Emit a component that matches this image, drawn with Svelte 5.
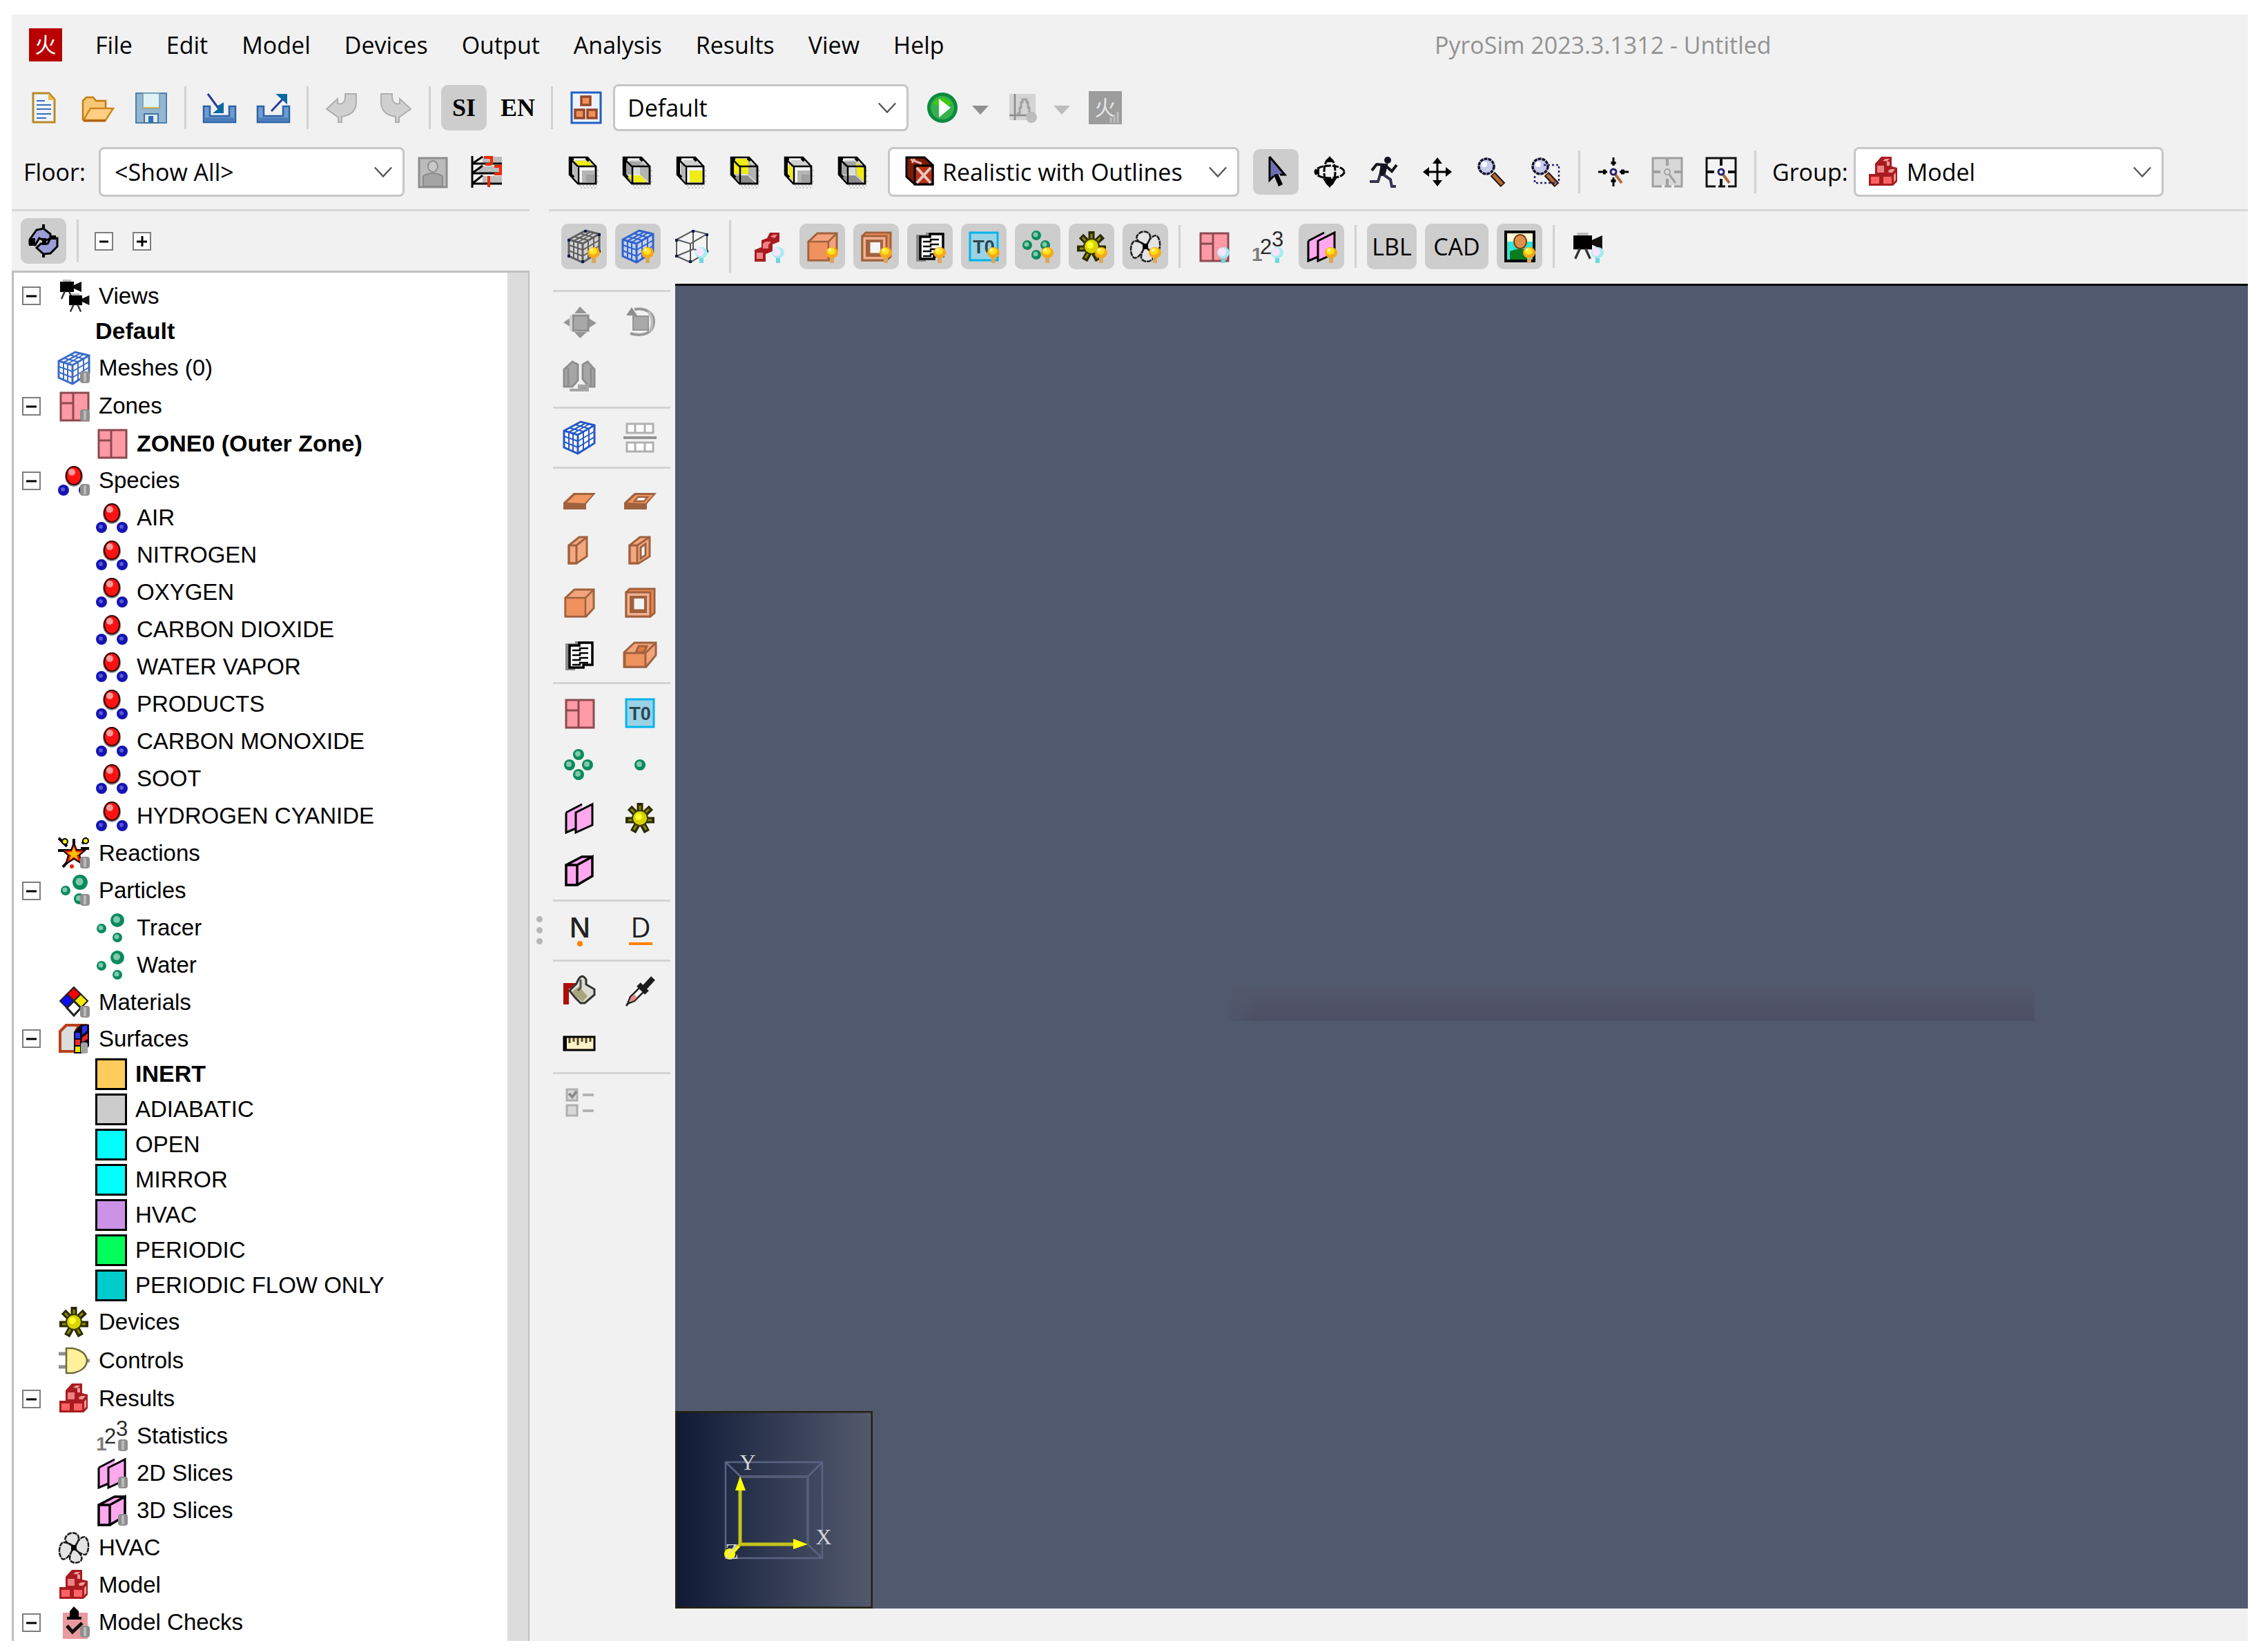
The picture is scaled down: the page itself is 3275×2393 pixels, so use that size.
<script>
  const line = (x1, y1, x2, y2) => `M${x1} ${y1}L${x2} ${y2}`;
  const bulb = `<rect x="35" y="39" width="6" height="9" fill="#d8a860"/><ellipse cx="38" cy="33" rx="9" ry="8" fill="#f5a81c"/><ellipse cx="37" cy="31" rx="6" ry="5" fill="#ffe21a"/><circle cx="35" cy="29" r="2" fill="#fff6b0"/>`;
  const coldBulb = `<rect x="35" y="39" width="6" height="9" fill="#6fd6de"/><ellipse cx="38" cy="33" rx="9" ry="8" fill="#a4ecf2"/><ellipse cx="36" cy="32" rx="6" ry="6" fill="#f6e4fb"/>`;
  const pill = `<rect x="33" y="29" width="14" height="17" rx="4" fill="#8f8f8f"/><rect x="38" y="31" width="4" height="13" fill="#b9b9b9"/>`;

  const lit = {
    top: '12,8 33,8 40,15 19,15',
    bottom: '11,29 31,29 40,39 20,39',
    front: '24,22 42,22 42,39 24,39',
    back: '8,5 31,5 31,27 8,27',
    left: '11,12 17,18 17,37 11,30',
    right: '31,9 36,15 43,19 43,38 32,28'
  };
  function cube(part) {
    const inside = ['bottom', 'back', 'right'].includes(part);
    return `<path d="M20 44H46M22 47H44M46 22H48M46 30H48M46 38H48" stroke="#c4c4c4" stroke-width="2" stroke-dasharray="2 3"/>
      <polygon points="6,3 32,3 44,16 44,41 18,41 6,28" fill="#f4f4f4"/>
      <polygon points="14,7 33,7 42,16 18,16" fill="#d0d0d0"/>
      ${inside
        ? '<polygon points="10,9 30,9 30,28 10,28" fill="#a4a4a4"/><polygon points="30,9 44,18 44,40 30,28" fill="#b4b4b4"/><polygon points="8,29 30,29 42,40 20,40" fill="#8c8c8c"/><rect x="20" y="17" width="10" height="11" fill="#dcdcdc"/>'
        : '<polygon points="11,11 17,17 17,38 11,30" fill="#b8b8b8"/><rect x="24" y="22" width="18" height="17" fill="#b4b4b4"/><rect x="30" y="28" width="12" height="11" fill="#a0a0a0"/>'}
      <polygon points="${lit[part]}" fill="#f0ec14"/>
      <path d="M6 3H32L44 16V41H18L6 28ZM6 4L18 16" fill="none" stroke="#000" stroke-width="2.5"/>
      <rect x="19" y="16" width="25" height="25" fill="none" stroke="#000" stroke-width="2.5"/>
      <path d="M8 3V28M5 5H12M8 28L12 32M30 4L34 8" stroke="#000" stroke-width="4"/>`;
  }
  function mesh(stroke, fill = '#fff', dense = true) {
    const grid = [
      [9, 16, 9, 41], [15, 18, 15, 44], [2, 22, 22, 29], [2, 30, 22, 38], [30, 15, 30, 42], [38, 11, 38, 37],
      [22, 29, 46, 15], [22, 38, 46, 23], [9, 16, 33, 3], [15, 18, 39, 4], [10, 10, 30, 15], [18, 5, 38, 11]
    ];
    const hollow = [[26, 1, 26, 28], [26, 28, 2, 38], [26, 28, 46, 32]];
    return `<polygon points="2,14 26,1 46,6 46,32 22,47 2,38" fill="${fill}"/>
      <path d="${(dense ? grid : hollow).map((g) => line(...g)).join('')}" stroke="${stroke}" stroke-width="2"/>
      <path d="M2 14L26 1L46 6V32L22 47L2 38ZM2 14L22 20L46 6M22 20V47" fill="none" stroke="${stroke}" stroke-width="${dense ? 3 : 2}"/>`;
  }
  const nodes = '<path d="M24 0H28V4H24ZM44 5H48V9H44ZM0 13H4V17H0ZM44 29H48V33H44ZM0 36H4V40H0ZM20 44H24V48H20Z" fill="#0a1c50"/>';
  const zone = `<rect x="5" y="5" width="40" height="40" fill="#ff9aa6"/><path d="M5 5H45V45H5ZM23 5V45M5 20H23" fill="none" stroke="#8b4a50" stroke-width="3"/>`;
  const ball = (x, y, r) => `<circle cx="${x}" cy="${y}" r="${r}" fill="#0a8a5e"/><circle cx="${x - 1}" cy="${y - 1}" r="${r / 2}" fill="#7fc9ab"/>`;
  const molecule = `<ellipse cx="24" cy="18" rx="13" ry="15" fill="#8a8a8a"/><ellipse cx="24" cy="17" rx="12" ry="14" fill="#3a0000"/><ellipse cx="24" cy="17" rx="10" ry="12" fill="#ff1212"/><ellipse cx="21" cy="12" rx="5" ry="5" fill="#ff9a9a"/>
      <circle cx="9" cy="38" r="8" fill="#1414b4"/><circle cx="39" cy="38" r="8" fill="#1414b4"/><circle cx="8" cy="37" r="3" fill="#5a5ad0"/><circle cx="38" cy="37" r="3" fill="#5a5ad0"/>`;
  const gear = `<path d="M24 2V20M3 27H45M9 9L24 24L40 9M14 44L24 26L34 44" fill="none" stroke="#2a2a00" stroke-width="9"/><path d="M24 6V20M7 27H41M11 11L24 24L37 11M15 41L24 26L33 41" fill="none" stroke="#8d8a00" stroke-width="3"/><circle cx="24" cy="24" r="12" fill="#3a3a00"/><circle cx="24" cy="24" r="10" fill="#d8d400"/><circle cx="22" cy="22" r="5" fill="#ffff2a"/>`;
  const fan = `<path d="M24 22C13 18 8 12 14 6C20 0 30 2 31 9C31 14 28 19 26 22C29 14 36 6 41 9C47 15 46 30 41 34C36 34 29 30 27 27C33 32 38 38 34 43C28 48 19 46 18 40C18 35 20 30 22 27C18 35 12 43 7 40C1 34 2 20 8 16C14 16 20 19 24 22Z" fill="#e4e4e4" stroke="#1c1c1c" stroke-width="2.5" stroke-dasharray="7 1"/><rect x="20" y="20" width="8" height="8" fill="#000"/>`;
  const redBlocks = `<path d="M21 2H36V16L44 18V38L38 44H3V27H12V12Z" fill="#a81c1f"/><path d="M23 8L27 5H33L29 9V15H33V9" fill="#f09a9c"/><rect x="15" y="15" width="10" height="10" fill="#f08083"/><rect x="6" y="31" width="12" height="10" fill="#ff6266"/><rect x="24" y="31" width="12" height="10" fill="#ff6266"/><path d="M31 22L35 20H41L37 25H32Z M39 28L42 25V36L39 39Z" fill="#f09a9c"/>`;
  const count = `<g font-family="Liberation Sans"><text x="1" y="45" font-size="28" font-weight="700" fill="#7c7c7c">1</text><text x="13" y="35" font-size="31" fill="#2c2c2c">2</text><text x="30" y="24" font-size="31" fill="#2c2c2c">3</text></g>`;
  const slice2 = `<path d="M5 16L28 4V34L5 45Z" fill="#ffa8ee" /><path d="M19 16L43 4V34L19 45Z" fill="#ffa8ee"/><path d="M5 16L28 4M5 16V45L19 39M19 16L43 4V34L19 45Z" fill="none" stroke="#000" stroke-width="3"/>`;
  const slice3 = `<path d="M5 16L28 4H43V32L21 45H5Z" fill="#ffa8ee"/><path d="M5 16H21V45H5ZM21 16L43 4V32L21 45M5 16L28 4H43" fill="none" stroke="#000" stroke-width="3.5"/>`;
  const camera = `<rect x="0" y="3" width="20" height="15" fill="#000"/><path d="M20 8L31 3V18L20 13Z" fill="#111"/><rect x="4" y="0" width="12" height="3" fill="#bbb"/><path d="M7 17L2 28M13 17L18 28" stroke="#333" stroke-width="2.5"/>`;
  const box = `<path d="M4 17L17 5H45V32L34 44H4Z" fill="#f4a47c" stroke="#a0623e" stroke-width="3"/><rect x="4" y="17" width="29" height="27" fill="#f0925e" stroke="#a0623e" stroke-width="2.5"/><path d="M33 17L45 5" stroke="#a0623e" stroke-width="2.5"/>`;
  const frame = `<path d="M4 9L9 4H45V39L39 44H4Z" fill="#ee8a52" stroke="#a0623e" stroke-width="3"/><rect x="4" y="9" width="35" height="35" fill="#f4b08e" stroke="#a0623e" stroke-width="3"/><rect x="11" y="16" width="21" height="21" fill="#f4f4f4" stroke="#a0623e" stroke-width="4"/><path d="M13 16V36H32" fill="none" stroke="#a0623e" stroke-width="5"/>`;
  const louver = `<path d="M4 7H18V4H44V39H32V43H18V46H4Z" fill="#8a8a8a"/><path d="M10 10H24V6H43V38H30V42H10Z" fill="#fff" stroke="#000" stroke-width="3.5"/><path d="M14 17H25V14H37M14 24H25V21H37M14 31H25V28H37M14 38H25V35H37" fill="none" stroke="#000" stroke-width="2.5"/>`;
  const t0 = `<rect x="4" y="4" width="40" height="40" fill="#9ad2e6" stroke="#00b4ea" stroke-width="3"/><text x="24" y="34" font-size="27" font-weight="700" text-anchor="middle" font-family="Liberation Sans" fill="#2c4650">T0</text>`;
  const glass = `<circle cx="17" cy="16" r="11" fill="#c9cbec" stroke="#14142c" stroke-width="3.5" stroke-dasharray="5 1"/><circle cx="14" cy="13" r="4" fill="#fff"/><path d="M26 27L41 43" stroke="#1c0c00" stroke-width="9"/><path d="M27 28L40 42" stroke="#b06a3c" stroke-width="5"/>`;
  const target = (c, h, hub) => `<path d="M24 3V15M24 32V45M2 24H15M33 24H46" stroke="${c}" stroke-width="3"/><path d="M24 9V13M24 35V39M9 24H13M35 24H40" stroke="${c}" stroke-width="7"/><path d="M27 28L36 40" stroke="${h}" stroke-width="4"/><circle cx="24" cy="24" r="4" fill="#e8e8f8" stroke="${hub}" stroke-width="3"/>`;
  const brackets = (c, f) => `<path d="M3 4H45V45H3Z" fill="${f}" stroke="${c}" stroke-width="3"/><path d="M24 4V15M24 34V45M3 24H14M34 24H45" stroke="${c}" stroke-width="4"/><path d="M16 45H20M30 45H34" stroke="#f1f1f1" stroke-width="4"/>`;
  const arrows = (c) => `<path d="M24 5V43M5 24H43" stroke="${c}" stroke-width="3"/><path d="M24 3L31 12H17ZM24 45L31 36H17ZM3 24L12 17V31ZM45 24L36 17V31Z" fill="${c}"/>`;
  const flame = (bg, fg) => `<rect width="48" height="48" fill="${bg}"/><text x="24" y="35" font-size="31" text-anchor="middle" font-family="Noto Sans CJK SC" fill="${fg}">火</text>`;
  const tray = `<path d="M1 22H10V36H38V22H47V45H1Z" fill="#6f9bd0" stroke="#2d62a6" stroke-width="2.5"/><path d="M3 41H45" stroke="#4a7cba" stroke-width="5"/>`;
  const undo = `<path d="M2 26L18 11V18Q30 21 29 4H45V14Q46 34 24 37V45H19V38Z" fill="#d0d0d0" stroke="#aeaeae" stroke-width="2"/>`;

  const icons = {
    logo: flame('#b80000', '#fff'),
    logoGrey: flame('#9c9c9c', '#e4e4e4') + '<path d="M32 46V38M37 46V34M42 46V30" stroke="#bdbdbd" stroke-width="3"/>',
    file: `<path d="M9 3H32L40 12V45H9Z" fill="#eef4fd" stroke="#b98a24" stroke-width="3"/><path d="M31 3V13H40Z" fill="#f0b840"/><path d="M14 14H26M14 20H35M14 26H35M14 33H35M14 39H28" stroke="#3c6eb4" stroke-width="2"/>`,
    open: `<path d="M3 42V14L8 9H18L22 14H36V24" fill="#f8c878" stroke="#c47a10" stroke-width="2.5"/><path d="M4 42L14 25H47L36 42Z" fill="#ffd083" stroke="#d0841c" stroke-width="2.5"/><path d="M4 43H36" stroke="#b06008" stroke-width="3"/>`,
    save: `<rect x="2" y="3" width="44" height="43" fill="#94b6d0" stroke="#4f80a8" stroke-width="2"/><rect x="12" y="3" width="24" height="22" fill="#dff2f6" stroke="#6e96b4" stroke-width="1.5"/><rect x="12" y="23" width="24" height="2" fill="#d8b84c"/><rect x="14" y="33" width="20" height="13" fill="#dceaf4" stroke="#3f74a0" stroke-width="2"/><rect x="20" y="36" width="7" height="9" fill="#2f6cb4"/>`,
    import: tray + `<path d="M7 4L24 27" stroke="#2a3aa0" stroke-width="3"/><path d="M29 18V31H17L23 26L22 22Z" fill="#0a6aa0" stroke="#0a6aa0" stroke-width="2"/>`,
    export: tray + `<path d="M21 29L38 11" stroke="#2a3aa0" stroke-width="3"/><path d="M30 5H43V17Z" fill="#0a6aa0" stroke="#0a6aa0" stroke-width="2"/>`,
    undo,
    redo: `<g transform="matrix(-1 0 0 1 48 0)">${undo}</g>`,
    results: `<rect x="3" y="2" width="42" height="44" fill="#eef2fb" stroke="#1f5fc4" stroke-width="3"/><rect x="17" y="8" width="13" height="12" fill="#f09058" stroke="#94482a" stroke-width="3.5"/><rect x="8" y="27" width="13" height="12" fill="#f09058" stroke="#94482a" stroke-width="3.5"/><rect x="26" y="27" width="13" height="12" fill="#f09058" stroke="#94482a" stroke-width="3.5"/>`,
    run: `<circle cx="24" cy="24" r="22" fill="#0c8a3e"/><circle cx="24" cy="24" r="17" fill="#35b04c"/><path d="M10 18Q24 2 38 18L24 24Z" fill="#3ccc10"/><path d="M19 11L36 24L19 38Z" fill="#fff"/>`,
    plot: `<rect x="3" y="4" width="38" height="38" fill="#d4d4d4"/><path d="M11 4V42M3 35H41" stroke="#8a8a8a" stroke-width="2.5"/><path d="M14 32H18V24H20V16H22V12H28V16H30V24H32V32H38" fill="none" stroke="#a0a0a0" stroke-width="3"/><circle cx="35" cy="38" r="8" fill="#bdbdbd"/>`,
    person: `<rect x="4" y="4" width="40" height="42" fill="#bcbcbc" stroke="#8e8e8e" stroke-width="3"/><ellipse cx="24" cy="16" rx="7" ry="8" fill="#c8c8c8" stroke="#8e8e8e" stroke-width="2"/><path d="M10 45V30Q24 22 38 30V45Z" fill="#a4a4a4" stroke="#8a8a8a" stroke-width="2"/>`,
    floors: `<path d="M18 2H46V12H18ZM12 16H46V26H12ZM18 30H46V40H18Z" fill="#bdbdbd"/><path d="M3 1V47M3 12H46M3 26H46M3 41H46M3 12L18 2M3 26L18 15M3 41L18 29" fill="none" stroke="#000" stroke-width="3"/><path d="M20 3H31V13M22 13H31M35 16H44V27H35M27 30V46" fill="none" stroke="#f02800" stroke-width="4"/>`,
    brick: `<path d="M6 3H32L44 14V42H18L6 31Z" fill="#7c1c08" stroke="#000" stroke-width="3"/><rect x="18" y="15" width="26" height="27" fill="#b83014" stroke="#000" stroke-width="3"/><path d="M21 18L41 40M41 18L21 40" stroke="#e8c8c0" stroke-width="4"/><path d="M12 6L28 12M18 5L14 11" stroke="#e8b0a4" stroke-width="3"/>`,
    pointer: `<path d="M15 2V36L22 30L28 45L34 42L28 28H37Z" fill="#6d70b4"/><path d="M15 2V36L21 30M15 2L37 28H30" fill="none" stroke="#000" stroke-width="3"/><path d="M21 28L28 45L34 42L27 27Z" fill="#000"/>`,
    orbit: `<ellipse cx="24" cy="24" rx="21" ry="9" fill="none" stroke="#000" stroke-width="3" stroke-dasharray="9 2"/><ellipse cx="24" cy="24" rx="8" ry="19" fill="none" stroke="#000" stroke-width="3" stroke-dasharray="9 2"/><path d="M24 1L31 10H17ZM24 47L34 34H14Z" fill="#000"/><path d="M2 24L9 17V30Z" fill="#000"/>`,
    walk: `<circle cx="30" cy="7" r="5" fill="#14141e"/><path d="M13 13L28 14L24 29M27 15L36 23L43 14M14 13L7 22" fill="none" stroke="#14141e" stroke-width="4"/><path d="M20 13H30L26 30H17Z" fill="#14141e"/><path d="M19 28L16 38H4M24 28L34 35L36 45H42" fill="none" stroke="#33334e" stroke-width="4"/>`,
    pan: arrows('#000'),
    zoom: glass,
    zoomBox: glass + `<path d="M22 14H44V40H9V28" fill="none" stroke="#23236a" stroke-width="2.5" stroke-dasharray="3 3"/>`,
    fit: target('#000', '#b06a3c', '#23236a'),
    fitGrey: brackets('#a0a0a0', '#d8d8d8') + `<path d="M27 28L36 40" stroke="#a0a0a0" stroke-width="3"/><circle cx="24" cy="24" r="4" fill="#ddd" stroke="#a0a0a0" stroke-width="2"/>`,
    fitBox: brackets('#111', '#f4f4f4') + `<path d="M27 28L36 40" stroke="#b06a3c" stroke-width="4"/><circle cx="24" cy="24" r="4" fill="#fff" stroke="#23236a" stroke-width="3"/>`,
    blocks: redBlocks,
    refresh: `<path d="M24 0V8M24 40V48" stroke="#000" stroke-width="4"/><path d="M4 22L14 8L24 6L34 14V20L26 24L18 20L12 30L4 28Z" fill="#9c9cd6" stroke="#000" stroke-width="3"/><path d="M44 24V32L34 42L24 43L14 34L20 28L30 28L34 20H44Z" fill="#9c9cd6" stroke="#000" stroke-width="3"/><path d="M3 20H12V31H3ZM22 20H28V30H22ZM34 16H42V22H34Z" fill="#000"/>`,
    mesh: mesh('#2458c4'),
    meshOn: mesh('#2f62cc', '#c4d0ee') + bulb,
    meshGrey: mesh('#5e5e5e', '#d2d2d2') + nodes + bulb,
    meshOutline: mesh('#5a5a5a', '#f4f4f4', false) + nodes + coldBulb,
    meshTree: mesh('#3a6cc8') + pill,
    group: `<path d="M4 46V29L14 25V15L22 12L26 4H40V17L30 21V31L20 35V46Z" fill="#a81c1f"/><path d="M27 10L31 7H37L33 12ZM16 20L20 17H28L24 22V27H16ZM7 33H16V42H7Z" fill="#f08083"/>` + coldBulb,
    boxOn: box + bulb,
    frameOn: frame + bulb,
    louverOn: louver + bulb,
    t0On: t0 + bulb,
    particlesOn: ball(22, 8, 7) + ball(9, 22, 7) + ball(35, 22, 7) + ball(22, 36, 7) + bulb,
    gearOn: gear + bulb,
    fanOn: fan + bulb,
    zoneOff: zone + coldBulb,
    countOff: count + coldBulb,
    sliceOn: slice2 + bulb,
    image: `<rect x="4" y="3" width="41" height="42" fill="#fffbd8" stroke="#000" stroke-width="4"/><rect x="6" y="17" width="37" height="26" fill="#2fe6d2"/><ellipse cx="25" cy="17" rx="9" ry="10" fill="#e0924c" stroke="#7a3a10" stroke-width="2"/><path d="M10 43V31Q25 24 40 31V43Z" fill="#0c7a1e"/>` + bulb,
    cameraOff: `<g transform="translate(3 4) scale(1.35)">${camera}</g>` + coldBulb,
    views: `<g transform="translate(4 0)">${camera}</g><g transform="translate(17 20) scale(.95)">${camera}</g>`,
    zoneTree: zone + pill,
    zone,
    molecule,
    speciesTree: molecule + pill,
    reaction: `<path d="M2 2L14 14M36 10L43 3M1 20H14M34 17H46M8 44L16 35M24 3V14" stroke="#000" stroke-width="4"/><path d="M24 9L28 19H41L32 27L37 40L24 32L12 40L16 27L7 19H20Z" fill="#f02010" stroke="#000" stroke-width="2"/><path d="M24 15L27 22L34 23L28 27L30 34L24 29L18 34L20 27L14 23L21 22Z" fill="#ffc400"/><circle cx="11" cy="7" r="4" fill="#ffee00" stroke="#000" stroke-width="2"/><circle cx="41" cy="6" r="4" fill="#ffee00" stroke="#000" stroke-width="2"/><circle cx="21" cy="43" r="3" fill="#f02010"/>` + pill,
    particlesTree: ball(33, 12, 11) + ball(12, 24, 7) + ball(32, 36, 8) + pill,
    tracer: ball(32, 13, 10) + ball(9, 25, 7) + ball(32, 38, 7),
    material: `<path d="M24 2L34 12L24 22L14 12Z" fill="#f00000" stroke="#222" stroke-width="2"/><path d="M14 12L24 22L14 32L4 22Z" fill="#0c0cf0" stroke="#222" stroke-width="2"/><path d="M34 12L44 22L34 32L24 22Z" fill="#f0e800" stroke="#222" stroke-width="2"/><path d="M24 22L34 32L24 43L14 32Z" fill="#fff" stroke="#222" stroke-width="3"/>` + pill,
    surface: `<path d="M2 12L12 2H44V44H2Z" fill="#b8401c"/><path d="M6 14L14 6H28L24 14V40H6Z" fill="#dcdcdc"/><path d="M24 14L34 3H46V34L38 45H24Z" fill="#050518"/><path d="M26 15H33V23H26ZM36 6L43 4V12L36 18Z" fill="#2c34f0"/><rect x="26" y="25" width="7" height="8" fill="#f02828"/><path d="M36 22L44 16V24L36 29Z" fill="#f02828"/><rect x="26" y="35" width="7" height="8" fill="#f0e800"/><rect x="34" y="29" width="10" height="16" rx="3" fill="#a4a4a4"/>`,
    gear,
    gate: `<path d="M2 14H14M2 33H14M42 24H47" stroke="#8f8f8f" stroke-width="5"/><path d="M13 6H22Q42 10 43 24Q42 38 22 42H13Z" fill="#fff29a" stroke="#6e6a40" stroke-width="2.5"/>`,
    countTree: count + pill,
    slice2Tree: slice2 + pill,
    slice3Tree: slice3 + pill,
    fan,
    check: `<rect x="8" y="10" width="36" height="38" fill="#ea9a9e"/><path d="M24 1L31 8V16H35V20H14V16H18V8Z" fill="#000"/><path d="M14 29L22 38L36 25" fill="none" stroke="#111" stroke-width="5"/>` + pill,
    move: `<path d="M25 1L35 11H17ZM25 47L35 38H17ZM1 24L12 17V31ZM49 25L38 18V32Z" fill="#959595"/><rect x="15" y="14" width="22" height="22" fill="#a8a8a8" stroke="#8e8e8e" stroke-width="3"/><rect x="10" y="14" width="4" height="22" fill="#d4d4d4"/>`,
    rotate: `<path d="M16 5C34 2 45 12 44 24C43 38 30 46 10 40" fill="none" stroke="#989898" stroke-width="4"/><path d="M36 8Q46 22 38 38" fill="none" stroke="#bdbdbd" stroke-width="4"/><path d="M4 14L12 2L20 14Z" fill="#909090"/><rect x="14" y="15" width="22" height="20" fill="#a8a8a8" stroke="#959595" stroke-width="2"/>`,
    mirror: `<path d="M2 14L14 3L22 7V30L14 39H2Z" fill="#a6a6a6" stroke="#8e8e8e" stroke-width="3"/><path d="M8 12V38" stroke="#8e8e8e" stroke-width="3"/><path d="M46 14L36 3L29 7V28L38 39H46Z" fill="#a6a6a6" stroke="#8e8e8e" stroke-width="3"/><path d="M41 12V38" stroke="#8e8e8e" stroke-width="3"/><path d="M10 44H28M24 38H36V44H24Z" stroke="#a6a6a6" stroke-width="4" fill="#999"/>`,
    split: `<path d="M5 4H43V17H5ZM17 4V17M31 4V17M5 31H43V44H5ZM17 31V44M31 31V44" fill="#fff" stroke="#b0b0b0" stroke-width="3"/><path d="M0 24H48" stroke="#949494" stroke-width="4"/>`,
    slab: `<path d="M1 25L16 11H48L34 27V35H1Z" fill="#a0623e"/><path d="M6 25L18 14H43L32 26Z" fill="#f2965f"/>`,
    slabHole: `<path d="M1 25L16 11H48L34 27V35H1Z" fill="#a0623e"/><path d="M6 25L18 14H43L32 26Z" fill="#f2965f"/><path d="M16 23L21 17H35L30 23Z" fill="#fff" stroke="#a0623e" stroke-width="2.5"/>`,
    wall: `<path d="M9 17L24 5H35V33L20 43H9Z" fill="#f4a880" stroke="#a0623e" stroke-width="3"/><path d="M9 17H20V43H9ZM20 17L35 5" fill="none" stroke="#a0623e" stroke-width="3"/>`,
    wallHole: `<path d="M9 17L24 5H38V33L22 43H9Z" fill="#f4a880" stroke="#a0623e" stroke-width="3"/><path d="M9 17H20V43H9ZM20 17L38 5" fill="none" stroke="#a0623e" stroke-width="3"/><path d="M25 20L32 15V31L25 36Z" fill="#fff" stroke="#a0623e" stroke-width="3"/>`,
    box,
    frame,
    louver,
    stack: `<path d="M1 20L16 6H47V24L33 41H1Z" fill="#f4a47c" stroke="#a0623e" stroke-width="3"/><path d="M18 20L22 11H34L30 20Z" fill="#e07a40" stroke="#a0623e" stroke-width="3"/><rect x="2" y="21" width="30" height="20" fill="#f0925e" stroke="#a0623e" stroke-width="3"/><path d="M33 20L46 7" stroke="#a0623e" stroke-width="3"/>`,
    t0,
    particles: ball(23, 8, 8) + ball(10, 23, 8) + ball(36, 23, 8) + ball(23, 37, 8),
    particle: ball(24, 23, 8),
    slice2,
    slice3,
    node: `<text x="25" y="34" font-size="40" font-weight="600" text-anchor="middle" font-family="Open Sans" fill="#222">N</text><circle cx="25" cy="43" r="4" fill="#ff8200"/>`,
    duct: `<text x="25" y="34" font-size="40" text-anchor="middle" font-family="Open Sans" fill="#222">D</text><path d="M8 43H42" stroke="#ff8200" stroke-width="4"/>`,
    bucket: `<path d="M5 44V17H20" fill="none" stroke="#b00c0c" stroke-width="8"/><path d="M10 24L20 14Q27 -4 34 8V15L46 22V30L32 42H26L18 34Z" fill="#dcdcd2" stroke="#333" stroke-width="3"/><path d="M14 25L24 18L36 32L29 40L19 33Z" fill="#a8a67e"/><path d="M26 8V20L22 24" fill="none" stroke="#555" stroke-width="3"/>`,
    dropper: `<path d="M6 43L10 33L24 19L30 25L16 39Z" fill="#f4f4f4" stroke="#222" stroke-width="2.5"/><path d="M8 40L12 32L17 30L19 35L14 39Z" fill="#e8868a"/><path d="M22 15L34 27M30 20L43 6" stroke="#1c1c1c" stroke-width="8"/><path d="M4 46L7 42" stroke="#333" stroke-width="3"/>`,
    ruler: `<rect x="2" y="15" width="44" height="19" fill="#fff2c8" stroke="#000" stroke-width="3"/><path d="M4 15V34" stroke="#000" stroke-width="4"/><path d="M10 16V24M16 16V22M22 16V27M28 16V22M34 16V24M40 16V22" stroke="#4c4422" stroke-width="3"/>`,
    options: `<path d="M6 4H21V20H6ZM6 27H21V42H6Z" fill="#d8d8d8" stroke="#b0b0b0" stroke-width="3"/><path d="M9 10L14 15L20 7" fill="none" stroke="#8a8a8a" stroke-width="4"/><path d="M29 12H45M29 35H45" stroke="#b4b4b4" stroke-width="4"/>`
  };
  const cubeTools = Object.keys(lit);
  for (const part of cubeTools) icons['cube-' + part] = cube(part);

  const menus = ['File', 'Edit', 'Model', 'Devices', 'Output', 'Analysis', 'Results', 'View', 'Help'];

  const fileTools = [
    ['file', 'New'], ['open', 'Open'], ['save', 'Save'], null,
    ['import', 'Import'], ['export', 'Export'], null,
    ['undo', 'Undo'], ['redo', 'Redo'], null
  ];
  const navTools = [
    ['pointer', 'Select', true], ['orbit', 'Orbit'], ['walk', 'Walk'], ['pan', 'Pan'], ['zoom', 'Zoom'], ['zoomBox', 'Zoom box'], null,
    ['fit', 'Reset view'], ['fitGrey', 'Fit selection'], ['fitBox', 'Fit all'], null
  ];
  const showTools = [
    ['meshGrey', 'Mesh grid', true], ['meshOn', 'Mesh boundary', true], ['meshOutline', 'Mesh outline'], 'wide',
    ['group', 'Geometry'], ['boxOn', 'Obstructions', true], ['frameOn', 'Holes', true], ['louverOn', 'Vents', true],
    ['t0On', 'Initial regions', true], ['particlesOn', 'Particle clouds', true], ['gearOn', 'Device markers', true], ['fanOn', 'HVAC parts', true], null,
    ['zoneOff', 'Zone regions'], ['countOff', 'Statistic regions'], ['sliceOn', 'Slices', true], null
  ];
  const palette = [
    ['move', 'rotate', 'mirror'],
    ['mesh', 'split'],
    ['slab', 'slabHole', 'wall', 'wallHole', 'box', 'frame', 'louver', 'stack'],
    ['zone', 't0', 'particles', 'particle', 'slice2', 'gear', 'slice3'],
    ['node', 'duct'],
    ['bucket', 'dropper', 'ruler'],
    ['options']
  ];
  const paletteKinds = ['roomy', '', 'solids', '', '', '', ''];

  const species = ['AIR', 'NITROGEN', 'OXYGEN', 'CARBON DIOXIDE', 'WATER VAPOR', 'PRODUCTS', 'CARBON MONOXIDE', 'SOOT', 'HYDROGEN CYANIDE'];
  const surfaces = [
    ['INERT', '#ffcc5c'], ['ADIABATIC', '#cccccc'], ['OPEN', '#00ffff'], ['MIRROR', '#00ffff'],
    ['HVAC', '#cc92e6'], ['PERIODIC', '#00ff5a'], ['PERIODIC FLOW ONLY', '#00cccc']
  ];
  const tree = [
    { text: 'Views', icon: 'views', open: true, size: 'short' },
    { text: 'Default', child: true, bold: true, size: 'short' },
    { text: 'Meshes (0)', icon: 'meshTree', size: 'tall' },
    { text: 'Zones', icon: 'zoneTree', open: true },
    { text: 'ZONE0 (Outer Zone)', icon: 'zone', child: true, bold: true },
    { text: 'Species', icon: 'speciesTree', open: true },
    ...species.map((text) => ({ text, icon: 'molecule', child: true })),
    { text: 'Reactions', icon: 'reaction' },
    { text: 'Particles', icon: 'particlesTree', open: true },
    { text: 'Tracer', icon: 'tracer', child: true },
    { text: 'Water', icon: 'tracer', child: true },
    { text: 'Materials', icon: 'material' },
    { text: 'Surfaces', icon: 'surface', open: true, size: 'short' },
    ...surfaces.map(([text, color], i) => ({ text, color, child: true, bold: i === 0, size: 'short' })),
    { text: 'Devices', icon: 'gear', size: 'tall' },
    { text: 'Controls', icon: 'gate', size: 'tall' },
    { text: 'Results', icon: 'blocks', open: true },
    { text: 'Statistics', icon: 'countTree', child: true },
    { text: '2D Slices', icon: 'slice2Tree', child: true },
    { text: '3D Slices', icon: 'slice3Tree', child: true },
    { text: 'HVAC', icon: 'fan' },
    { text: 'Model', icon: 'blocks' },
    { text: 'Model Checks', icon: 'check', open: true }
  ];
</script>

{#snippet icon(name)}
  <svg class="icon" viewBox="0 0 48 48" aria-hidden="true">{@html icons[name]}</svg>
{/snippet}

{#snippet tool(name, label, pressed = false)}
  <button class="tool" class:pressed aria-label={label}>{@render icon(name)}</button>
{/snippet}

{#snippet tools(list)}
  {#each list as item}
    {#if Array.isArray(item)}
      {@render tool(item[0], item[1], item[2])}
    {:else}
      <span class="sep" class:wide={item === 'wide'}></span>
    {/if}
  {/each}
{/snippet}

{#snippet combo(id, kind, value, iconName = '')}
  <div class="combo {kind}">
    {#if iconName}{@render icon(iconName)}{/if}
    <select {id} aria-label={id}><option>{value}</option></select>
    <svg class="chevron" viewBox="0 0 30 20" aria-hidden="true"><path d="M2 3L15 17L28 3" fill="none" stroke="#555" stroke-width="2.5" /></svg>
  </div>
{/snippet}

{#snippet caret(color)}
  <button class="caret" aria-label="More options"><svg viewBox="0 0 24 13" aria-hidden="true"><path d="M0 0H24L12 13Z" fill={color} /></svg></button>
{/snippet}

<div class="page">
  <div class="window">
    <header class="titlebar">
      {@render icon('logo')}
      <nav>
        {#each menus as menu}<button>{menu}</button>{/each}
      </nav>
      <h1>PyroSim 2023.3.1312 - Untitled</h1>
    </header>

    <div class="bar">
      {@render tools(fileTools)}
      <button class="tool unit pressed">SI</button>
      <button class="tool unit">EN</button>
      <span class="sep"></span>
      <div class="field">
        {@render tool('results', 'Manage scenarios')}
        {@render combo('scenario', 'scenario', 'Default')}
      </div>
      <div class="runs">
        {@render tool('run', 'Run')}
        {@render caret('#8f8f8f')}
      </div>
      <div class="split">
        {@render tool('plot', 'Plot results')}
        {@render caret('#bdbdbd')}
      </div>
      {@render tool('logoGrey', 'View results')}
    </div>

    <div class="bar views">
      <div class="floor">
        <label for="floor">Floor:</label>
        {@render combo('floor', 'floors', '<Show All>')}
        <div class="group">
          {@render tool('person', 'Background image')}
          {@render tool('floors', 'Edit floors')}
        </div>
      </div>
      <div class="group">
        {#each cubeTools as part}{@render tool('cube-' + part, 'View ' + part)}{/each}
      </div>
      {@render combo('rendering', 'rendering', 'Realistic with Outlines', 'brick')}
      <div class="group">{@render tools(navTools)}</div>
      <div class="model-field">
        <label for="group">Group:</label>
        {@render combo('group', 'model', 'Model', 'blocks')}
      </div>
    </div>

    <div class="body">
      <aside>
        <div class="treebar">
          {@render tool('refresh', 'Synchronize selection', true)}
          <span class="sep"></span>
          <button class="fold" aria-label="Collapse all"><svg viewBox="0 0 23 23" aria-hidden="true"><path d="M5 12H18" /></svg></button>
          <button class="fold" aria-label="Expand all"><svg viewBox="0 0 23 23" aria-hidden="true"><path d="M4 12H19M12 4V19" /></svg></button>
        </div>
        <div class="panel">
          <ul>
            {#each tree as row}
              <li class="row {row.size ?? ''}" class:child={row.child} class:bold={row.bold}>
                {#if !row.child}
                  {#if row.open}
                    <button class="toggle" aria-label="Collapse {row.text}"><svg viewBox="0 0 23 23" aria-hidden="true"><path d="M4 12H19" /></svg></button>
                  {:else}
                    <span class="toggle"></span>
                  {/if}
                {/if}
                {#if row.color}
                  <span class="swatch" style="background:{row.color}"></span>
                {:else if row.icon}
                  {@render icon(row.icon)}
                {/if}
                <span>{row.text}</span>
              </li>
            {/each}
          </ul>
          <div class="scroll"></div>
        </div>
      </aside>

      <div class="splitter"><i></i><i></i><i></i></div>

      <main>
        <div class="bar show">
          {@render tools(showTools)}
          <button class="tool text pressed">LBL</button>
          <button class="tool text pressed cad">CAD</button>
          {@render tool('image', 'Show image', true)}
          <span class="sep"></span>
          {@render tool('cameraOff', 'Camera')}
        </div>
        <div class="work">
          <div class="palette">
            {#each palette as names, i}
              <div class="set {paletteKinds[i]}">
                {#each names as name}
                  <button class="cell" aria-label={name}>{@render icon(name)}</button>
                {/each}
              </div>
            {/each}
          </div>
          <section class="viewport" aria-label="3D view">
            <div class="shade"></div>
            <svg class="axes" viewBox="0 0 286 286" role="img" aria-label="Axes">
              <defs>
                <linearGradient id="night"><stop offset="0" stop-color="#101935" /><stop offset=".5" stop-color="#313a52" /><stop offset="1" stop-color="#535a6e" /></linearGradient>
              </defs>
              <rect x="1" y="1" width="284" height="284" fill="url(#night)" stroke="#26210f" stroke-width="3" />
              <path d="M73 74H213V213H73ZM73 74L95 95M213 74L192 95M213 213L192 193" fill="none" stroke="#5a6482" stroke-width="2.5" />
              <path d="M95 95H192V193" fill="none" stroke="#555c78" stroke-width="4" />
              <path d="M94 110V193H175M94 193L80 207" fill="none" stroke="#c4c41c" stroke-width="5" />
              <path d="M94 94L102 115H87ZM192 193L171 185V200Z" fill="#ff0" />
              <circle cx="79" cy="207" r="8" fill="#ff0" />
              <g font-family="Liberation Serif" font-size="32" fill="#d4d4d4" text-anchor="middle">
                <text x="105" y="85">Y</text><text x="215" y="193">X</text><text x="82" y="214">Z</text>
              </g>
              <path d="M77 212L92 196" stroke="#ff0" stroke-width="4" />
            </svg>
          </section>
        </div>
      </main>
    </div>
  </div>
</div>

<style>
  :global(body) {
    margin: 0;
    background: #fff;
  }
  .page {
    box-sizing: border-box;
    padding: 21px 19px 16px 17px;
    font-family: 'Open Sans', 'Noto Sans', sans-serif;
    font-size: 34px;
    color: #000;
  }
  .window {
    background: #f1f1f1;
  }
  button {
    font: inherit;
    color: inherit;
    background: none;
    border: 0;
    padding: 0;
  }
  .icon {
    display: block;
    flex: none;
    width: 48px;
    height: 48px;
    overflow: visible;
  }
  .titlebar {
    display: flex;
    align-items: center;
    height: 88px;
    padding: 0 0 2px 25px;
  }
  nav {
    display: flex;
    gap: 49px;
    padding: 0 20px 0 48px;
  }
  h1 {
    flex: 1;
    margin: 0;
    font-size: 34px;
    font-weight: 400;
    text-align: center;
    color: #929292;
  }
  .bar {
    display: flex;
    align-items: center;
    gap: 12px;
    height: 90px;
    padding-left: 13px;
  }
  .tool {
    display: flex;
    flex: none;
    align-items: center;
    justify-content: center;
    width: 66px;
    height: 66px;
    border-radius: 10px;
  }
  .pressed {
    background: #cdcdcd;
  }
  .unit {
    font-family: 'Liberation Serif', serif;
    font-size: 36px;
    font-weight: 700;
  }
  .text {
    width: 72px;
  }
  .cad {
    width: 92px;
  }
  .sep {
    flex: none;
    width: 9px;
    height: 62px;
    background: linear-gradient(#d2d2d2, #d2d2d2) center / 3px 100% no-repeat;
  }
  .wide {
    width: 21px;
    height: 76px;
  }
  .field,
  .split,
  .runs,
  .group,
  .floor,
  .model-field {
    display: flex;
    align-items: center;
  }
  .field {
    gap: 6px;
  }
  .split,
  .runs {
    gap: 4px;
  }
  .runs {
    padding-left: 4px;
  }
  .group {
    gap: 12px;
  }
  .model-field {
    gap: 8px;
  }
  .caret {
    width: 36px;
    height: 66px;
  }
  .caret svg {
    width: 24px;
    height: 13px;
    vertical-align: middle;
  }
  .combo {
    box-sizing: border-box;
    display: flex;
    flex: none;
    align-items: center;
    height: 72px;
    padding-left: 20px;
    background: #fff;
    border: 3px solid #c6c6c6;
    border-radius: 8px;
  }
  .scenario {
    width: 428px;
    height: 68px;
    padding-left: 18px;
  }
  .floors {
    width: 443px;
  }
  .rendering {
    width: 509px;
    padding-left: 18px;
  }
  .model {
    width: 449px;
    padding-left: 16px;
  }
  .combo .icon {
    margin-right: 10px;
  }
  select {
    flex: 1;
    min-width: 0;
    height: 100%;
    padding: 0 48px 0 0;
    font: inherit;
    color: inherit;
    background: none;
    border: 0;
    appearance: none;
  }
  .chevron {
    flex: none;
    width: 28px;
    height: 20px;
    margin: 0 14px 0 -42px;
    pointer-events: none;
  }
  .views {
    box-sizing: border-box;
    height: 102px;
    padding: 0 0 6px;
    gap: 20px;
  }
  .floor {
    box-sizing: border-box;
    width: 773px;
    padding-left: 17px;
    gap: 8px;
  }
  .floor label {
    width: 101px;
  }
  .body {
    display: flex;
  }
  aside {
    display: flex;
    flex: none;
    flex-direction: column;
    width: 750px;
  }
  aside,
  main {
    border-top: 3px solid #d8d8d8;
  }
  .treebar {
    display: flex;
    align-items: center;
    gap: 12px;
    height: 86px;
    padding-left: 13px;
  }
  .fold {
    width: 43px;
    height: 66px;
  }
  .fold svg,
  .toggle svg {
    display: block;
    box-sizing: border-box;
    width: 27px;
    height: 27px;
    margin: auto;
    background: #fff;
    border: 2px solid #7d7d7d;
    fill: none;
    stroke: #000;
    stroke-width: 3;
  }
  .panel {
    display: flex;
    background: #fff;
    border: 3px solid #bfbfbf;
    border-width: 3px 2px 0 3px;
  }
  ul {
    flex: 1;
    margin: 0;
    padding: 8px 0 0 12px;
    list-style: none;
    font-family: 'Liberation Sans', Arial, sans-serif;
    font-size: 33px;
  }
  .scroll {
    width: 30px;
    background: #dcdcdc;
  }
  .row {
    display: flex;
    align-items: center;
    gap: 12px;
    height: 54px;
    white-space: nowrap;
  }
  .short {
    height: 51px;
  }
  .tall {
    height: 56px;
  }
  .child {
    padding-left: 106px;
  }
  .bold {
    font-size: 34px;
    font-weight: 700;
  }
  .toggle {
    flex: none;
    width: 27px;
    height: 27px;
    margin-right: 12px;
  }
  .swatch {
    box-sizing: border-box;
    width: 46px;
    height: 46px;
    border: 3px solid #000;
  }
  .splitter {
    display: flex;
    flex: none;
    flex-direction: column;
    align-items: center;
    justify-content: center;
    gap: 7px;
    width: 28px;
    padding-top: 14px;
  }
  .splitter i {
    width: 9px;
    height: 9px;
    background: #b6b6b6;
    border-radius: 50%;
  }
  main {
    display: flex;
    flex: 1;
    flex-direction: column;
    min-width: 0;
  }
  .show {
    height: 101px;
    padding: 0 0 4px 18px;
  }
  .work {
    display: flex;
    flex: 1;
  }
  .palette {
    display: flex;
    flex: none;
    flex-direction: column;
    width: 183px;
    padding-top: 9px;
  }
  .set {
    display: grid;
    grid-template-columns: 88px 88px;
    grid-auto-rows: 76px;
    padding: 7px 0 4px;
    background: linear-gradient(#d3d3d3, #d3d3d3) 6px 0 / 170px 3px no-repeat;
  }
  .roomy {
    grid-auto-rows: 78px;
    padding: 8px 0 5px;
  }
  .solids {
    grid-template-rows: 64px;
    padding-top: 19px;
    padding-bottom: 1px;
  }
  .cell {
    display: grid;
    place-items: center;
  }
  .viewport {
    position: relative;
    flex: 1;
    margin-bottom: 47px;
    background: #51596e;
    border-top: 3px solid #000;
  }
  .shade {
    position: absolute;
    top: 53%;
    left: 35%;
    right: 309px;
    height: 50px;
    background: linear-gradient(#53586c, #4b4e64);
    mask-image: linear-gradient(100deg, transparent, #000 60px);
  }
  .axes {
    position: absolute;
    left: 0;
    bottom: 0;
    width: 286px;
    height: 286px;
  }
</style>
